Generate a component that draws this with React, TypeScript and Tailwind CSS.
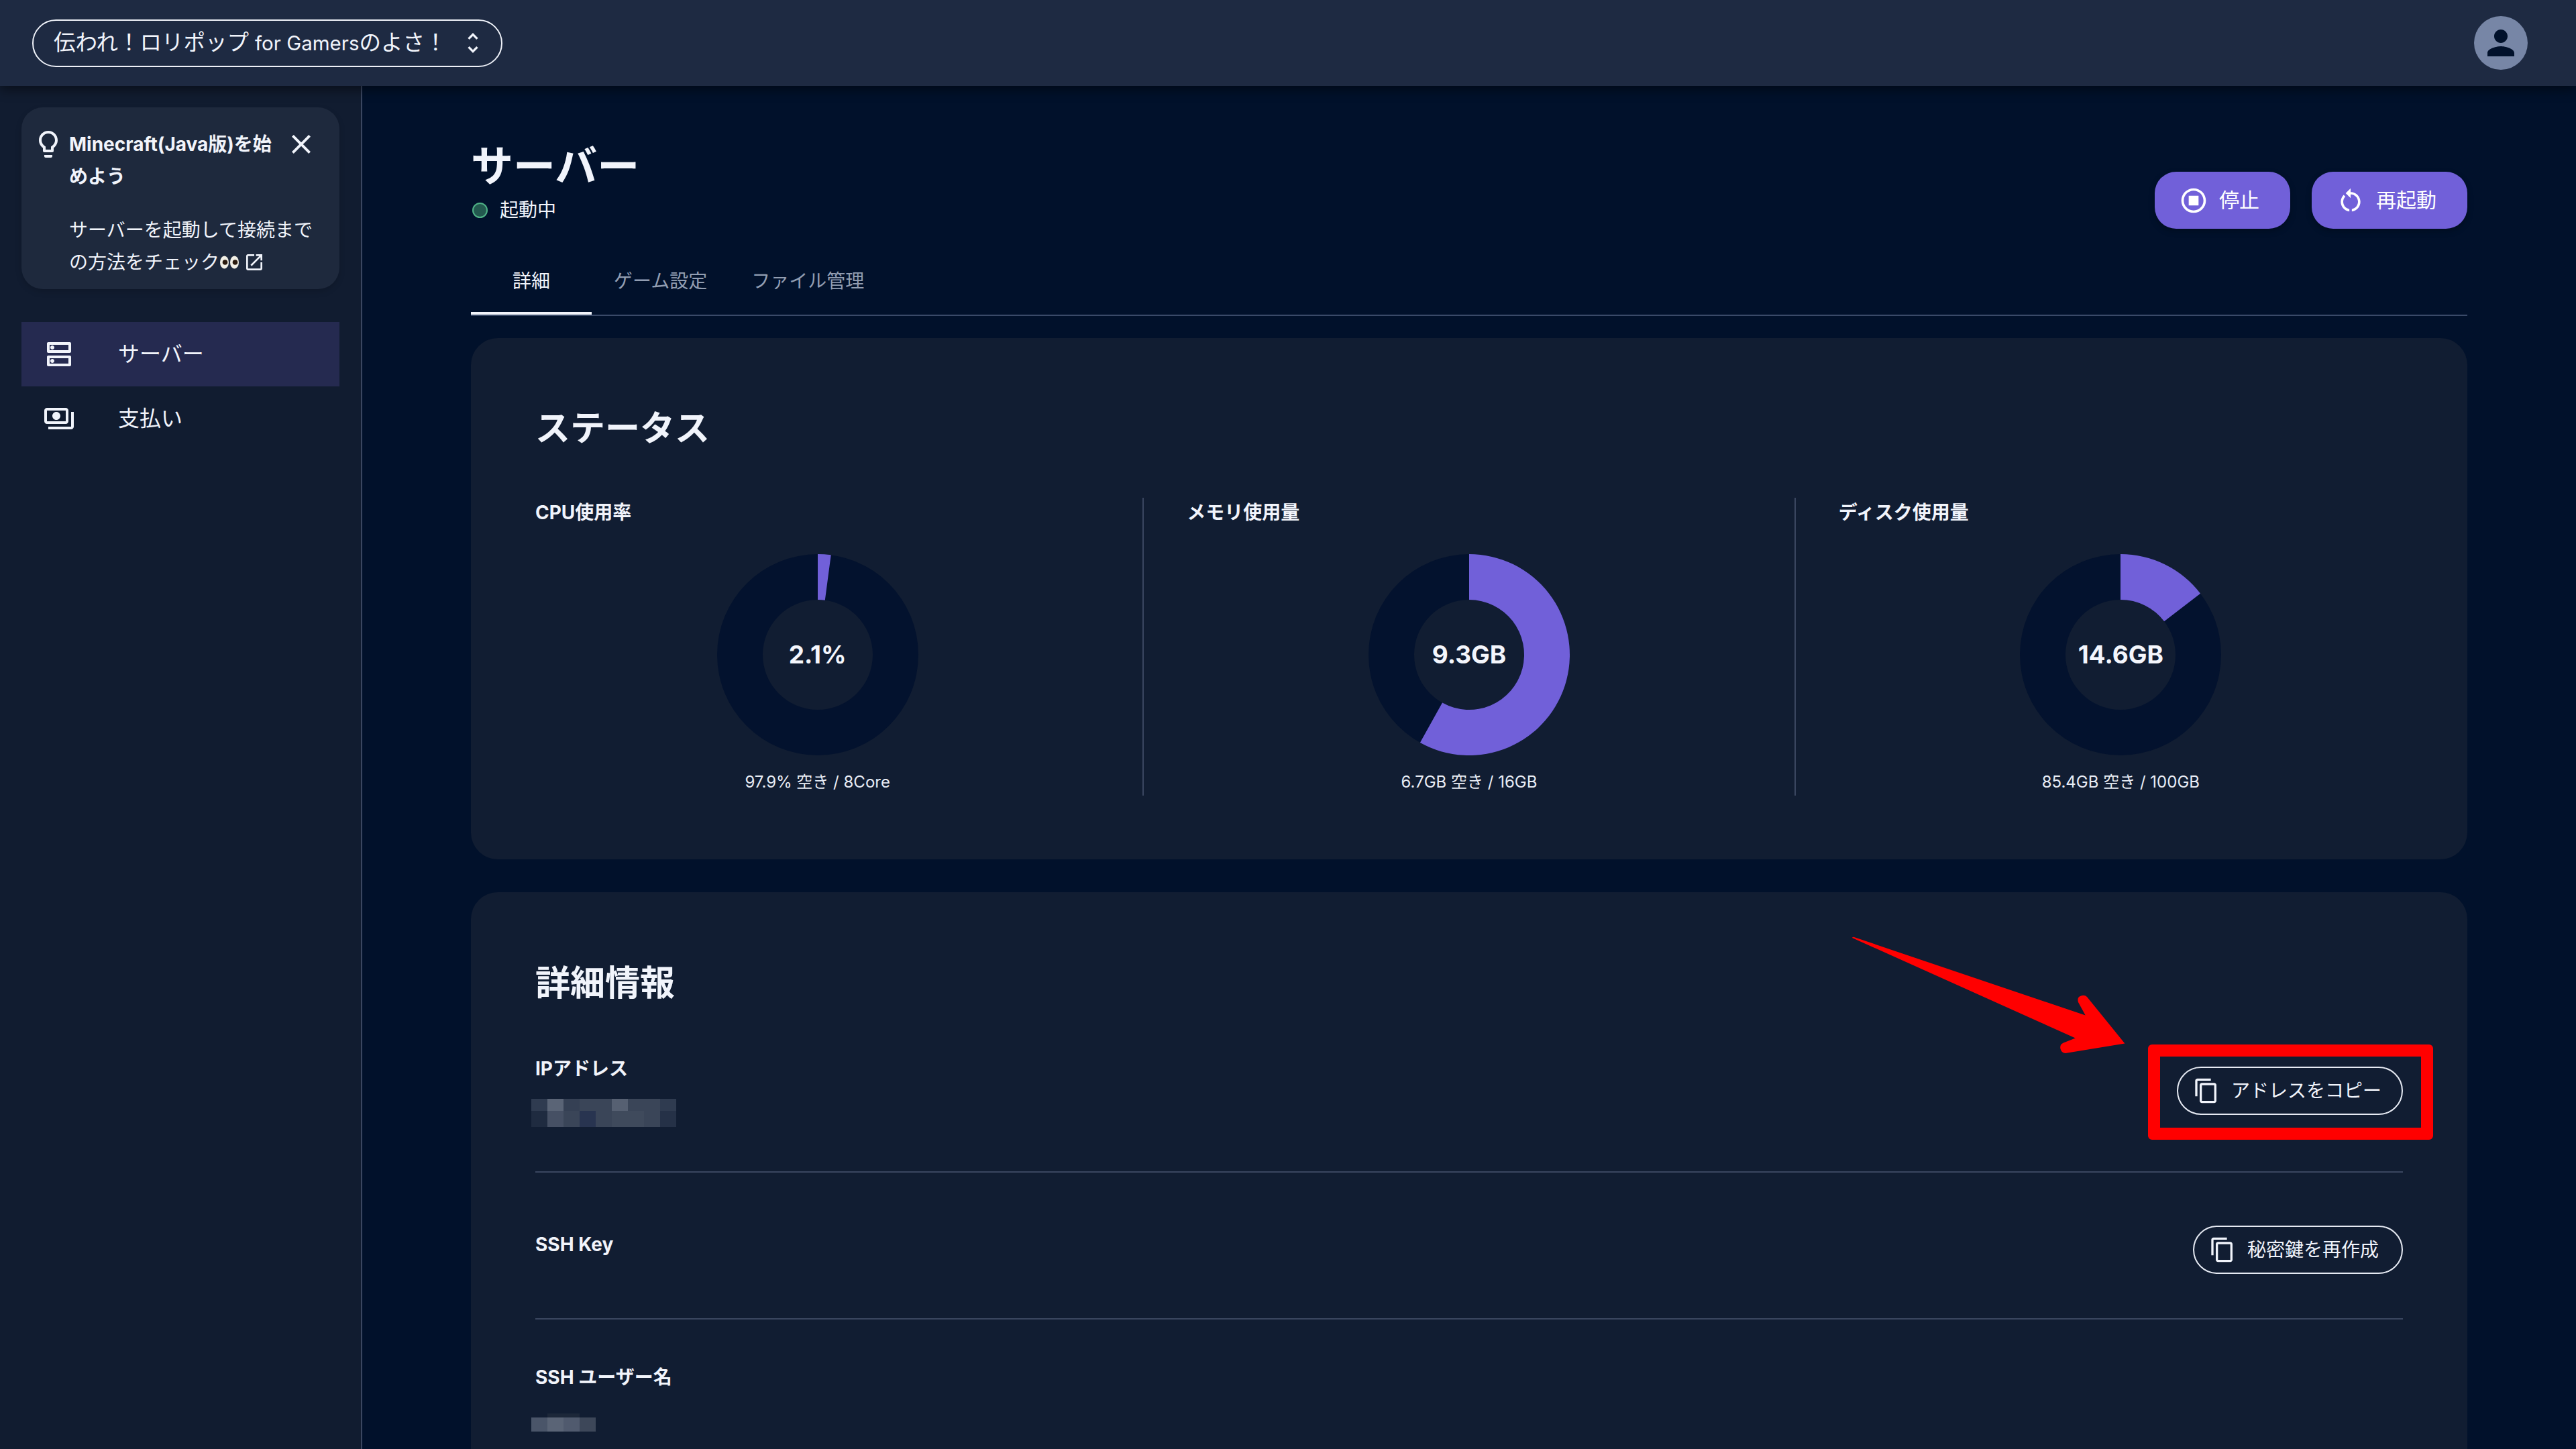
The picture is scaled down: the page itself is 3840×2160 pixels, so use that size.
import React from "react";

const MI = ({ d, className }: { d: string; className: string }) => (
  <svg viewBox="0 0 24 24" fill="currentColor" className={className}>
    <path d={d} />
  </svg>
);

const icons = {
  unfold: "M12 5.83L15.17 9l1.41-1.41L12 3 7.41 7.59 8.83 9 12 5.83zm0 12.34L8.83 15l-1.41 1.41L12 21l4.59-4.59L15.17 15 12 18.17z",
  person: "M12 12c2.21 0 4-1.79 4-4s-1.79-4-4-4-4 1.79-4 4 1.79 4 4 4zm0 2c-2.67 0-8 1.34-8 4v2h16v-2c0-2.66-5.33-4-8-4z",
  bulb: "M9 21c0 .55.45 1 1 1h4c.55 0 1-.45 1-1v-1H9v1zm3-19C8.14 2 5 5.14 5 9c0 2.38 1.19 4.47 3 5.74V17c0 .55.45 1 1 1h6c.55 0 1-.45 1-1v-2.26c1.81-1.27 3-3.36 3-5.74 0-3.86-3.14-7-7-7zm2.85 11.1l-.85.6V16h-4v-2.3l-.85-.6C7.8 12.16 7 10.63 7 9c0-2.76 2.24-5 5-5s5 2.24 5 5c0 1.63-.8 3.16-2.15 4.1z",
  close: "M19 6.41L17.59 5 12 10.59 6.41 5 5 6.41 10.59 12 5 17.59 6.41 19 12 13.41 17.59 19 19 17.59 13.41 12z",
  open: "M19 19H5V5h7V3H5c-1.11 0-2 .9-2 2v14c0 1.1.89 2 2 2h14c1.1 0 2-.9 2-2v-7h-2v7zM14 3v2h3.59l-9.83 9.83 1.41 1.41L19 6.41V10h2V3h-7z",
  dns: "M19 15v4H5v-4h14m1-2H4c-.55 0-1 .45-1 1v6c0 .55.45 1 1 1h16c.55 0 1-.45 1-1v-6c0-.55-.45-1-1-1zM7 18.5c-.82 0-1.5-.67-1.5-1.5s.68-1.5 1.5-1.5 1.5.67 1.5 1.5-.67 1.5-1.5 1.5zM19 5v4H5V5h14m1-2H4c-.55 0-1 .45-1 1v6c0 .55.45 1 1 1h16c.55 0 1-.45 1-1V4c0-.55-.45-1-1-1zM7 8.5c-.82 0-1.5-.67-1.5-1.5S6.18 5.5 7 5.5s1.5.67 1.5 1.5S7.83 8.5 7 8.5z",
  pay: "M19 14V6c0-1.1-.9-2-2-2H3c-1.1 0-2 .9-2 2v8c0 1.1.9 2 2 2h14c1.1 0 2-.9 2-2zm-2 0H3V6h14v8zm-7-7c-1.66 0-3 1.34-3 3s1.34 3 3 3 3-1.34 3-3-1.34-3-3-3zm13 0v11c0 1.1-.9 2-2 2H4v-2h17V7h2z",
  stop: "M12 2C6.48 2 2 6.48 2 12s4.48 10 10 10 10-4.48 10-10S17.52 2 12 2zm0 18c-4.41 0-8-3.59-8-8s3.59-8 8-8 8 3.59 8 8-3.59 8-8 8zm4-4H8V8h8v8z",
  restart: "M12 5V2L8 6l4 4V7c3.31 0 6 2.69 6 6 0 2.97-2.17 5.43-5 5.91v2.02c3.95-.49 7-3.85 7-7.93 0-4.42-3.58-8-8-8zm-6 8c0-1.65.67-3.15 1.76-4.24L6.34 7.34C4.9 8.79 4 10.79 4 13c0 4.08 3.05 7.44 7 7.93v-2.02c-2.83-.48-5-2.94-5-5.91z",
  copy: "M16 1H4c-1.1 0-2 .9-2 2v14h2V3h12V1zm3 4H8c-1.1 0-2 .9-2 2v14c0 1.1.9 2 2 2h11c1.1 0 2-.9 2-2V7c0-1.1-.9-2-2-2zm0 16H8V7h11v14z",
};

function arc(fraction: number) {
  const R = 150;
  const r = 82;
  const a = fraction * Math.PI * 2;
  const sin = Math.sin(a);
  const cos = Math.cos(a);
  const large = fraction > 0.5 ? 1 : 0;
  return `M150 0 A${R} ${R} 0 ${large} 1 ${150 + R * sin} ${150 - R * cos} L${150 + r * sin} ${150 - r * cos} A${r} ${r} 0 ${large} 0 150 ${150 - r} Z`;
}

function Gauge({ label, value, sub, fraction }: { label: string; value: string; sub: string; fraction: number }) {
  return (
    <div className="flex-1 min-w-0 flex flex-col">
      <div className="h-[44px] leading-[44px] text-[28px] font-bold text-[#f1f4fb]">{label}</div>
      <div className="mt-[40px] grid place-items-center">
        <svg viewBox="0 0 300 300" className="col-start-1 row-start-1 w-[300px] h-[300px]">
          <path fillRule="evenodd" fill="#03122e" d="M150 0a150 150 0 1 0 0 300a150 150 0 1 0 0-300zM150 68a82 82 0 1 1 0 164a82 82 0 1 1 0-164z" />
          <path fill="#7160d9" d={arc(fraction)} />
        </svg>
        <div className="col-start-1 row-start-1 text-[37px] font-bold text-[#f4f6fc]">{value}</div>
      </div>
      <div className="mt-[20px] h-[40px] leading-[40px] text-center text-[24px] text-[#e8ecf5]">{sub}</div>
    </div>
  );
}

const OutlineBtn = ({ children, className }: { children: React.ReactNode; className: string }) => (
  <button className={`h-[72px] flex items-center rounded-full border-2 border-[#e6eaf3] pl-[22px] text-[28px] text-[#f1f4fb] ${className}`}>
    <MI d={icons.copy} className="w-[40px] h-[40px] mr-[17px]" />
    {children}
  </button>
);

const Mosaic = ({ rows }: { rows: { h: string; cells: string[] }[] }) => (
  <div className="flex flex-col -ml-[6px]">
    {rows.map((row, i) => (
      <div key={i} className={`flex ${row.h}`}>
        {row.cells.map((c, j) => (
          <div key={j} className={`w-[24px] h-full ${c}`} />
        ))}
      </div>
    ))}
  </div>
);

export default function App() {
  return (
    <div className="w-full h-[2160px] overflow-hidden flex flex-col bg-[#01112b] text-[#f1f4fb] font-[Inter,'Noto_Sans_CJK_JP',sans-serif]">
      <header className="relative z-10 h-[128px] shrink-0 flex items-center justify-between pl-[48px] pr-[72px] bg-[#1e2a42] shadow-[0_6px_16px_rgba(0,0,0,0.45)]">
        <button className="h-[71px] w-[701px] flex items-center justify-between rounded-full border-2 border-[#eef1f8] pl-[30px] pr-[22px] text-[32.5px] text-[#f1f4fb]">
          <span>
            伝われ！ロリポップ <span className="text-[29.5px]">for Gamers</span>のよさ！
          </span>
          <MI d={icons.unfold} className="w-[40px] h-[40px]" />
        </button>
        <div className="w-[80px] h-[80px] rounded-full bg-[#7786a6] flex items-center justify-center text-[#01112b]">
          <MI d={icons.person} className="w-[60px] h-[60px]" />
        </div>
      </header>

      <div className="flex-1 min-h-0 flex">
        <aside className="w-[540px] shrink-0 bg-[#111c30] border-r-2 border-[#3a4660] px-[32px] pt-[32px]">
          <div className="rounded-[32px] bg-[#1e293d] shadow-[0_4px_10px_rgba(0,0,0,0.15)] pl-[16px] pt-[31px] pb-[16px]">
            <div className="flex items-start">
              <MI d={icons.bulb} className="w-[48px] h-[48px] shrink-0" />
              <div className="ml-[7px] w-[322px] text-[28px] leading-[48px] font-bold whitespace-nowrap">
                Minecraft(Java版)を始
                <br />
                めよう
              </div>
              <MI d={icons.close} className="w-[48px] h-[48px] shrink-0" />
            </div>
            <div className="mt-[32px] pl-[55px] text-[28px] leading-[48px] whitespace-nowrap">
              サーバーを起動して接続まで
              <br />
              <span className="inline-flex items-center">
                の方法をチェック
                <svg viewBox="0 0 30 20" className="w-[30px] h-[20px]">
                  <ellipse cx="7.5" cy="10" rx="6.5" ry="9.5" fill="#f2efe6" />
                  <ellipse cx="22.5" cy="10" rx="6.5" ry="9.5" fill="#f2efe6" />
                  <circle cx="8.5" cy="10" r="3.8" fill="#2a1a0e" />
                  <circle cx="23.5" cy="10" r="3.8" fill="#2a1a0e" />
                </svg>
                <MI d={icons.open} className="w-[32px] h-[32px] ml-[6px]" />
              </span>
            </div>
          </div>

          <nav className="mt-[49px]">
            <div className="h-[96px] bg-[#252a50] flex items-center pl-[32px]">
              <MI d={icons.dns} className="w-[48px] h-[48px] mr-[64px]" />
              <span className="text-[32px]">サーバー</span>
            </div>
            <div className="h-[96px] flex items-center pl-[32px]">
              <MI d={icons.pay} className="w-[48px] h-[48px] mr-[64px]" />
              <span className="text-[32px]">支払い</span>
            </div>
          </nav>
        </aside>

        <main className="flex-1 min-w-0 px-[162px] pt-[79px]">
          <div className="flex justify-between items-start">
            <div>
              <h1 className="h-[80px] leading-[80px] text-[63px] font-bold">サーバー</h1>
              <div className="h-[52px] flex items-center">
                <span className="w-[23px] h-[23px] ml-[2px] rounded-full bg-[#23594f] border-2 border-[#4fb286]" />
                <span className="ml-[18px] text-[28px]">起動中</span>
              </div>
            </div>
            <div className="mt-[49px] flex gap-[32px]">
              <button className="h-[85px] flex items-center rounded-[32px] bg-[#7160d9] shadow-[0_4px_10px_rgba(0,0,0,0.25)] pl-[36px] pr-[46px] text-[30px] text-white">
                <MI d={icons.stop} className="w-[44px] h-[44px] mr-[16px]" />
                停止
              </button>
              <button className="h-[85px] flex items-center rounded-[32px] bg-[#7160d9] shadow-[0_4px_10px_rgba(0,0,0,0.25)] pl-[36px] pr-[46px] text-[30px] text-white">
                <MI d={icons.restart} className="w-[44px] h-[44px] mr-[16px]" />
                再起動
              </button>
            </div>
          </div>

          <div className="mt-[28px] flex border-b-2 border-[#3a4a68] text-[28px]">
            <div className="relative w-[180px] h-[100px] flex items-center justify-center text-[#f1f4fb]">
              詳細
              <span className="absolute left-0 right-0 bottom-0 h-[4px] bg-[#f1f4fb]" />
            </div>
            <div className="h-[100px] flex items-center px-[33px] text-[#929eb2]">ゲーム設定</div>
            <div className="h-[100px] flex items-center px-[33px] text-[#929eb2]">ファイル管理</div>
          </div>

          <section className="mt-[33px] rounded-[40px] bg-[#111d32] px-[96px] pt-[99px] pb-[95px]">
            <h2 className="h-[72px] leading-[72px] text-[52px] font-bold">ステータス</h2>
            <div className="mt-[67px] flex">
              <Gauge label="CPU使用率" value="2.1%" sub="97.9% 空き / 8Core" fraction={0.021} />
              <div className="w-[2px] mx-[64px] bg-[#3a4660]" />
              <Gauge label="メモリ使用量" value="9.3GB" sub="6.7GB 空き / 16GB" fraction={0.581} />
              <div className="w-[2px] mx-[64px] bg-[#3a4660]" />
              <Gauge label="ディスク使用量" value="14.6GB" sub="85.4GB 空き / 100GB" fraction={0.146} />
            </div>
          </section>

          <section className="mt-[49px] rounded-[40px] bg-[#111d32] px-[96px] pt-[100px] h-[1000px]">
            <h2 className="h-[72px] leading-[72px] text-[52px] font-bold">詳細情報</h2>

            <div className="flex justify-between items-start border-b-2 border-[#3a4660] pt-[71px] pb-[66px]">
              <div>
                <div className="h-[40px] leading-[40px] text-[28px] font-bold">IPアドレス</div>
                <div className="mt-[25px]">
                  <Mosaic
                    rows={[
                      { h: "h-[18px]", cells: ["bg-[#2f3b50]", "bg-[#5a6476]", "bg-[#354054]", "bg-[#3a4558]", "bg-[#3a4558]", "bg-[#566072]", "bg-[#3a4558]", "bg-[#3a4558]", "bg-[#2f3b50]"] },
                      { h: "h-[24px]", cells: ["bg-[#1f2b40]", "bg-[#465064]", "bg-[#3a4558]", "bg-[#283450]", "bg-[#3a4558]", "bg-[#3f4a5c]", "bg-[#3f4a5c]", "bg-[#3a4558]", "bg-[#253147]"] },
                    ]}
                  />
                </div>
              </div>
              <div className="relative mt-[17px]">
                <OutlineBtn className="w-[337px]">アドレスをコピー</OutlineBtn>
                <div className="absolute -left-[43px] -right-[45px] -top-[33px] -bottom-[37px] border-[18px] border-[#ff0000] rounded-[6px]" />
                <svg viewBox="2750 1390 430 190" className="absolute -left-[494px] -top-[200px] w-[430px] h-[190px]">
                  <path
                    fill="#ff0000"
                    d="M2760 1398 Q2761 1396 2763 1397 L3107.7 1513.6 L3097 1494 Q3095 1487 3100 1485 Q3106 1482 3110 1486 L3166.4 1555.4 L3078 1570 Q3072 1570 3070.5 1563.6 Q3069 1557 3075 1554.6 L3092.7 1547.5 Z"
                  />
                </svg>
              </div>
            </div>

            <div className="flex justify-between items-start border-b-2 border-[#3a4660] pt-[79px] pb-[66px]">
              <div className="mt-[8px] h-[40px] leading-[40px] text-[28px] font-bold">SSH Key</div>
              <OutlineBtn className="w-[313px]">秘密鍵を再作成</OutlineBtn>
            </div>

            <div className="pt-[66px]">
              <div className="h-[40px] leading-[40px] text-[28px] font-bold">SSH ユーザー名</div>
              <div className="mt-[34px]">
                <Mosaic
                  rows={[
                    { h: "h-[6px]", cells: ["bg-[#111d32]", "bg-[#1c2739]", "bg-[#1c2739]", "bg-[#111d32]"] },
                    { h: "h-[21px]", cells: ["bg-[#4a5569]", "bg-[#5a6476]", "bg-[#505a6e]", "bg-[#3d4759]"] },
                  ]}
                />
              </div>
            </div>
          </section>
        </main>
      </div>
    </div>
  );
}
